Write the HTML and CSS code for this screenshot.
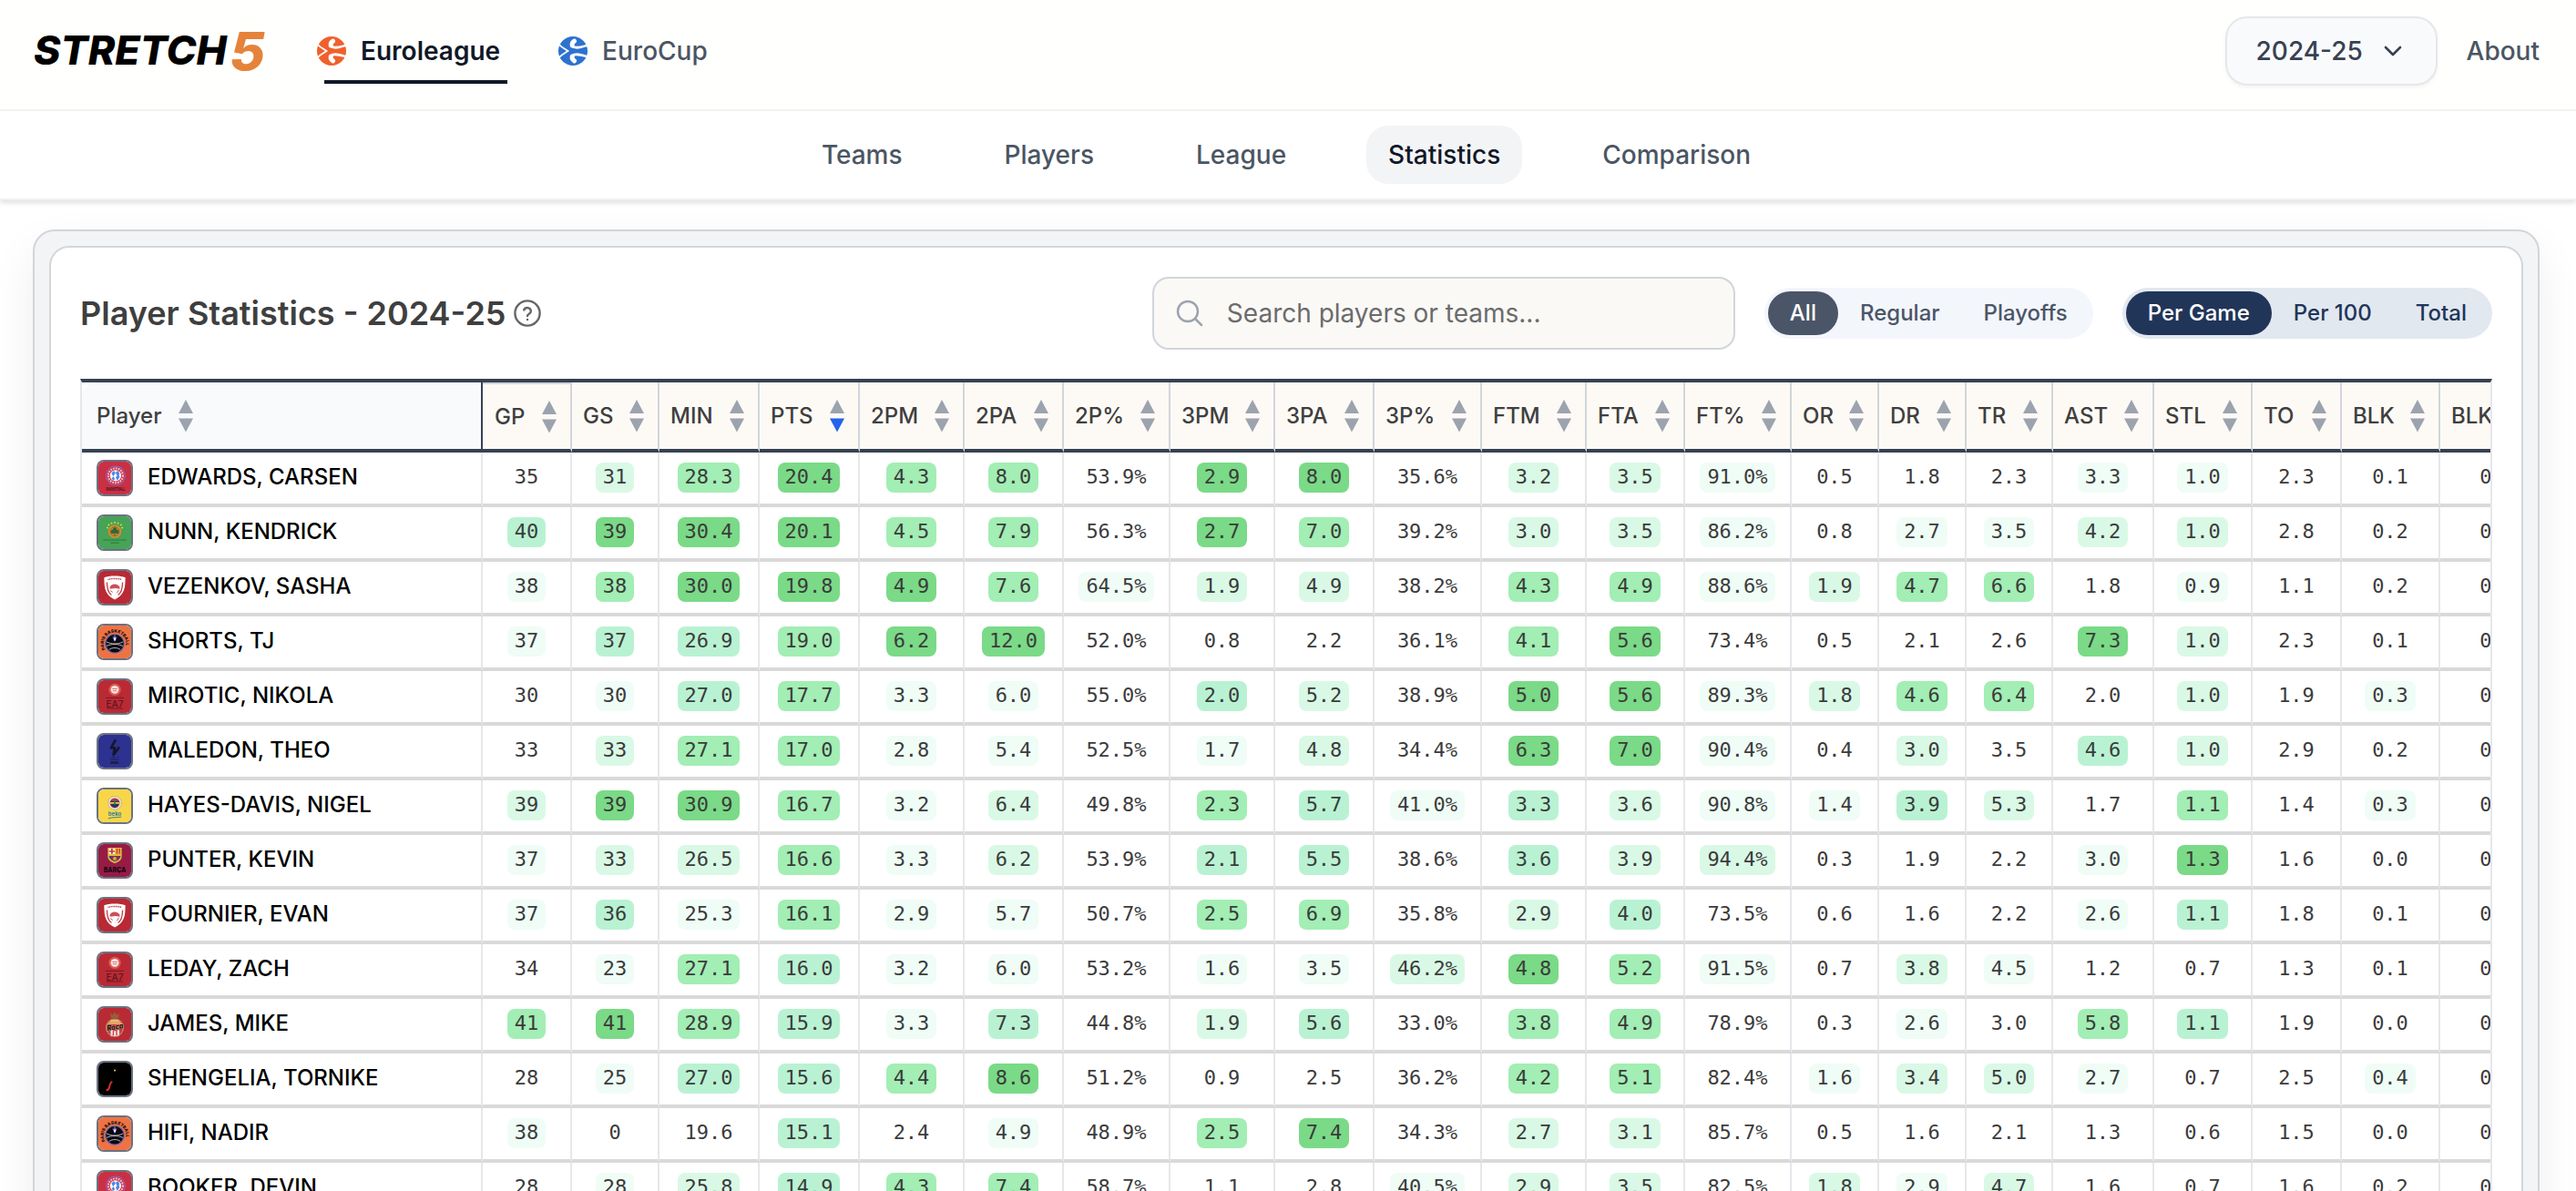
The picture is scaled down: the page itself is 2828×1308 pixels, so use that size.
FILE: index.html
```
<!DOCTYPE html>
<html lang="en">
<head>
<meta charset="utf-8">
<title>Stretch 5 - Player Statistics</title>
<link rel="stylesheet" href="styles.css">
</head>
<body>
<svg class="defs" aria-hidden="true">
  <symbol id="ball" viewBox="0 0 32 32">
    <circle cx="16" cy="16" r="16" fill="currentColor"/>
    <g fill="none" stroke="#fff" stroke-linecap="round">
      <path stroke-width="5" d="M17.500 5.200C15.500 6.500 14.800 8 15.200 10M17.500 26.800C15.500 25.500 14.800 24 15.200 22"/>
      <path stroke-width="2.600" d="M15 10.800C19 14 26 11.500 32 9.700M15 21.200C19 18 26 20.500 32 22.300"/>
      <path stroke-width="1.800" d="M1.500 9.500C4 12.500 7 13.500 10.500 16C7 18.500 4 19.500 1.500 22.500"/>
    </g>
  </symbol>
  <symbol id="sort" viewBox="0 0 16 36">
    <path d="M8 0L16 15H0z"/><path class="down" d="M8 35.500L0 20.500H16z"/>
  </symbol>
  <symbol id="bay" viewBox="0 0 40 40">
    <rect width="40" height="40" fill="#cb2f43"/>
    <circle cx="21" cy="17" r="12" fill="#5a80dd"/><circle cx="21" cy="17" r="11.200" fill="#d8324a"/>
    <circle cx="21" cy="17" r="8.900" fill="none" stroke="#f3c3cb" stroke-width="2.200" stroke-dasharray="2 1.200"/>
    <circle cx="21" cy="17" r="6.800" fill="#fff"/>
    <path d="M16 14l3-3 2 3-3 4zM21 13l3-2 2 4-3 3zM16 20l3-2 1 4-2 1zM21 19l4-3 1 3-3 4z" fill="#4b86ea"/>
    <text x="21" y="35.500" font-size="6" font-weight="700" text-anchor="middle" textLength="23" lengthAdjust="spacingAndGlyphs" fill="#4a1420">BASKETBALL</text>
  </symbol>
  <symbol id="pan" viewBox="0 0 40 40">
    <rect width="40" height="40" fill="#46a357"/>
    <circle cx="20" cy="18.500" r="8" fill="#e08a2e"/><circle cx="20" cy="18.500" r="5.600" fill="none" stroke="#7c6a2c"/>
    <g fill="#2c6a38"><circle cx="20" cy="16" r="2.500"/><circle cx="17.500" cy="19" r="2.500"/><circle cx="22.500" cy="19" r="2.500"/><path d="M19.400 19h1.200v4.500h-1.200z"/></g>
    <path d="M11 14h.1M12.500 10.500h.1M16 8.500h.1M20 7.700h.1M24 8.500h.1M27.500 10.500h.1M29 14h.1" stroke="#e4e23e" stroke-width="2" stroke-linecap="round"/>
    <path d="M6 29h28M15 32.500h10" stroke="#2d7a3c" stroke-width="1.400" stroke-dasharray="1.600 .5"/>
  </symbol>
  <symbol id="oly" viewBox="0 0 40 40">
    <rect width="40" height="40" fill="#b92a35"/>
    <path d="M7 8C13 5.500 27 5.500 33 8C32.500 17 34 28 20 35C6 28 7.500 17 7 8z" fill="#fff"/>
    <path d="M10.500 14C10.500 20 11 26 16 29.500M29.500 14C29.500 20 29 26 24 29.500" fill="none" stroke="#c4414b" stroke-width="1.500"/>
    <path d="M11.500 10.500C17 9 23 9 28.500 10.500" fill="none" stroke="#c4414b" stroke-width="1.600" stroke-dasharray="1.300 .6"/>
    <path d="M14 20C15 15.500 23 14.500 26 19.500L26 22L21 21L14 22z" fill="#cc4f58"/>
    <path d="M14.500 24l3 2M25 23l-2.500 4" stroke="#c4414b"/>
  </symbol>
  <symbol id="par" viewBox="0 0 40 40">
    <rect width="40" height="40" fill="#ee7344"/>
    <circle cx="20" cy="22" r="12" fill="#6b62b4"/><circle cx="20" cy="22" r="10.800" fill="#0b0a10"/>
    <path d="M20 11.500v7M10 20c6 3 14 3 20 0M10 25c6-3 14-3 20 0M13 29.500c4-3 10-3 14 0" fill="none" stroke="#dcd9e4" stroke-width=".9"/>
    <path d="M17 14h6l-3 6z" fill="#7b6fd8"/><path d="M19 15h2v3h-2z" fill="#fff"/>
    <path id="parc" d="M8.300 29A13.600 13.600 0 1 1 31.700 29" fill="none"/>
    <text font-size="5.200" font-weight="900" fill="#24120c"><textPath href="#parc" textLength="52">PARIS BASKETBALL</textPath></text>
  </symbol>
  <symbol id="mil" viewBox="0 0 40 40">
    <rect width="40" height="40" fill="#b92a35"/>
    <circle cx="20" cy="11.500" r="7.400" fill="#dd5a50"/><circle cx="20" cy="11.500" r="4.900" fill="#fbe6e4"/>
    <path d="M17 10.500h6M17.500 13h5" stroke="#c0444c" stroke-width=".8"/>
    <path d="M9 21.500h22M10 34.500h20" stroke="#6e1a22" stroke-width="1"/>
    <text x="20" y="32.800" font-size="11.500" font-weight="500" text-anchor="middle" textLength="21" lengthAdjust="spacingAndGlyphs" fill="#5d161d">EA7</text>
  </symbol>
  <symbol id="asv" viewBox="0 0 40 40">
    <rect width="40" height="40" fill="#2d3290"/>
    <path d="M21 6L15.500 16H20L18.500 24.500L25.500 15" fill="none" stroke="#15162c" stroke-width="3" stroke-linejoin="round"/>
    <text x="20" y="31.500" font-size="5" text-anchor="middle" textLength="11" fill="#1b1d52">LDLC</text>
    <text x="20" y="36" font-size="4" font-weight="800" text-anchor="middle" textLength="11" fill="#15162c">ASVEL</text>
  </symbol>
  <symbol id="fen" viewBox="0 0 40 40">
    <rect width="40" height="40" fill="#f9d648"/>
    <circle cx="20" cy="16.500" r="8.300" fill="#e9e4cf" stroke="#b4ac80" stroke-width=".8"/>
    <circle cx="20" cy="16.500" r="6" fill="#b8323f"/><path d="M14.500 14.500h11L24 20l-4 2.500L16 20z" fill="#1d3768"/><path d="M14.500 15.500h11v2h-11z" fill="#e8d33f"/>
    <path d="M19 13.500h2v5h-2z" fill="#2f7d4a"/>
    <text x="20" y="32" font-size="7.500" font-weight="700" text-anchor="middle" textLength="16" lengthAdjust="spacingAndGlyphs" fill="#2b7f9f">beko</text>
    <path d="M12 35.500C17 33.500 23 34.500 28 33.500" fill="none" stroke="#2b7f9f" stroke-width="1.100"/>
  </symbol>
  <symbol id="bar" viewBox="0 0 40 40">
    <rect width="40" height="40" fill="#971b45"/>
    <path d="M11.500 4.500h17V15C28.500 20 24 22 20 23.500C16 22 11.500 20 11.500 15z" fill="#e5b93c"/>
    <path d="M13 5.500h7v6.500h-7z" fill="#fff"/><path d="M15.500 5.500h2v6.500h-2zM13 8h7v1.800h-7z" fill="#cf2f3e"/>
    <path d="M22 5.500h1.500v6.500H22zM25 5.500h1.500v6.500H25z" fill="#c8313c"/>
    <path d="M13 14.500h14c0 3.500-4 5.800-7 7c-3-1.200-7-3.500-7-7z" fill="#27488f"/><path d="M16 14.500h2.500v6L16 19zM22 14.500h2.500V19L22 20.500z" fill="#a8213c"/>
    <circle cx="20" cy="17.800" r="2.200" fill="#d9a935"/>
    <text x="20" y="34.500" font-size="9" font-weight="800" text-anchor="middle" textLength="27" lengthAdjust="spacingAndGlyphs" fill="#120a10">BARÇA</text>
  </symbol>
  <symbol id="mon" viewBox="0 0 40 40">
    <rect width="40" height="40" fill="#b92a35"/>
    <path d="M14.500 6l3 3 2.500-4 2.500 4 3-3-1 6.500h-9z" fill="#8f6437"/>
    <circle cx="20" cy="24" r="11.300" fill="#b68a5e"/><circle cx="20" cy="24" r="9.800" fill="#c63c44"/>
    <path d="M11 20a10 10 0 0 1 18 0z" fill="#e9a35c"/><path d="M15 27h2.500v6H15zM19 28h2.500v6.500H19zM23 27h2.500v6H23z" fill="#f6e9e6"/>
    <path d="M15 15.500h10M15 34h10" stroke="#f2cfc8" stroke-width="1.400" stroke-dasharray="1.500 .7"/>
    <text x="20.500" y="26.500" font-size="9.500" font-weight="800" font-style="italic" text-anchor="middle" textLength="20" lengthAdjust="spacingAndGlyphs" transform="rotate(-10 20 24)" fill="#1b1210" stroke="#f0dcc0" stroke-width=".5" paint-order="stroke">Roca</text>
  </symbol>
  <symbol id="vir" viewBox="0 0 40 40">
    <rect width="40" height="40" fill="#000"/>
    <circle cx="20" cy="9.500" r="1.200" fill="#d9c63c"/>
    <path d="M9.500 33.500c2.600.4 3.200-.8 3.800-3.300c.7-3 1-6.200 3.700-7" fill="none" stroke="#e0312c" stroke-width="2.200"/>
  </symbol>
</svg>

<header class="topbar">
  <a class="logo"><svg width="256" height="48" viewBox="0 0 256 48"><text class="logo-word" x="1" y="40" textLength="212" lengthAdjust="spacingAndGlyphs">STRETCH</text><text class="logo-num" x="216" y="45.500" textLength="39" lengthAdjust="spacingAndGlyphs">5</text></svg></a>
  <nav class="leagues">
    <a class="league active"><svg class="ball orange"><use href="#ball"/></svg>Euroleague</a>
    <a class="league"><svg class="ball blue"><use href="#ball"/></svg>EuroCup</a>
  </nav>
  <div class="topright">
    <button class="season">2024-25<svg width="20" height="12" viewBox="0 0 20 12"><path d="M2 2l8 8 8-8" fill="none" stroke="currentColor" stroke-width="2.600" stroke-linecap="round" stroke-linejoin="round"/></svg></button>
    <a class="about">About</a>
  </div>
</header>
<nav class="subnav"><a>Teams</a><a>Players</a><a>League</a><a class="active">Statistics</a><a>Comparison</a></nav>

<main class="frame"><section class="panel">
  <div class="toolbar">
    <h1>Player Statistics - 2024-25</h1>
    <svg class="help" viewBox="0 0 30 30"><g fill="none" stroke="#666" stroke-width="2.400" stroke-linecap="round" stroke-linejoin="round"><circle cx="15" cy="15" r="13.600"/><path d="M11.200 11.500a4 4 0 0 1 7.700 1.300c0 2.600-3.900 3.400-3.900 5.200M15 22h.01"/></g></svg>
    <label class="search"><svg width="30" height="30" viewBox="0 0 30 30"><g fill="none" stroke="#9ca3af" stroke-width="2.500" stroke-linecap="round"><circle cx="13" cy="13" r="11"/><path d="M21.500 21.500L28 28"/></g></svg><span>Search players or teams...</span></label>
    <div class="seg seg-phase"><a class="on">All</a><a>Regular</a><a>Playoffs</a></div>
    <div class="seg seg-mode"><a class="on">Per Game</a><a>Per 100</a><a>Total</a></div>
  </div>
  <div class="tablewrap">
  <table>
    <colgroup><col class="w440"><col class="w98"><col class="w96"><col class="w110"><col class="w110"><col class="w115"><col class="w109"><col class="w117"><col class="w115"><col class="w109"><col class="w118"><col class="w115"><col class="w108"><col class="w117"><col class="w96"><col class="w96"><col class="w95"><col class="w111"><col class="w108"><col class="w98"><col class="w108"><col class="w128"></colgroup>
    <thead><tr>
      <th class="first"><div>Player<svg><use href="#sort"/></svg></div></th>
      <th class="gp"><div>GP<svg><use href="#sort"/></svg></div></th>
      <th><div>GS<svg><use href="#sort"/></svg></div></th>
      <th><div>MIN<svg><use href="#sort"/></svg></div></th>
      <th class="sorted"><div>PTS<svg><use href="#sort"/></svg></div></th>
      <th><div>2PM<svg><use href="#sort"/></svg></div></th>
      <th><div>2PA<svg><use href="#sort"/></svg></div></th>
      <th><div>2P%<svg><use href="#sort"/></svg></div></th>
      <th><div>3PM<svg><use href="#sort"/></svg></div></th>
      <th><div>3PA<svg><use href="#sort"/></svg></div></th>
      <th><div>3P%<svg><use href="#sort"/></svg></div></th>
      <th><div>FTM<svg><use href="#sort"/></svg></div></th>
      <th><div>FTA<svg><use href="#sort"/></svg></div></th>
      <th><div>FT%<svg><use href="#sort"/></svg></div></th>
      <th><div>OR<svg><use href="#sort"/></svg></div></th>
      <th><div>DR<svg><use href="#sort"/></svg></div></th>
      <th><div>TR<svg><use href="#sort"/></svg></div></th>
      <th><div>AST<svg><use href="#sort"/></svg></div></th>
      <th><div>STL<svg><use href="#sort"/></svg></div></th>
      <th><div>TO<svg><use href="#sort"/></svg></div></th>
      <th><div>BLK<svg><use href="#sort"/></svg></div></th>
      <th><div>BLKA<svg><use href="#sort"/></svg></div></th>
    </tr></thead>
    <tbody>
    <tr><td><div class="player"><svg><use href="#bay"/></svg><span>EDWARDS, CARSEN</span></div></td><td><b>35</b></td><td><b class="h2">31</b></td><td><b class="h4">28.3</b></td><td><b class="h5">20.4</b></td><td><b class="h4">4.3</b></td><td><b class="h4">8.0</b></td><td><b>53.9%</b></td><td><b class="h5">2.9</b></td><td><b class="h5">8.0</b></td><td><b>35.6%</b></td><td><b class="h2">3.2</b></td><td><b class="h2">3.5</b></td><td><b class="h1">91.0%</b></td><td><b>0.5</b></td><td><b>1.8</b></td><td><b>2.3</b></td><td><b class="h1">3.3</b></td><td><b class="h1">1.0</b></td><td><b>2.3</b></td><td><b>0.1</b></td><td><b>0.1</b></td></tr>
    <tr><td><div class="player"><svg><use href="#pan"/></svg><span>NUNN, KENDRICK</span></div></td><td><b class="h3">40</b></td><td><b class="h5">39</b></td><td><b class="h5">30.4</b></td><td><b class="h5">20.1</b></td><td><b class="h4">4.5</b></td><td><b class="h4">7.9</b></td><td><b>56.3%</b></td><td><b class="h5">2.7</b></td><td><b class="h4">7.0</b></td><td><b>39.2%</b></td><td><b class="h2">3.0</b></td><td><b class="h2">3.5</b></td><td><b class="h1">86.2%</b></td><td><b>0.8</b></td><td><b class="h1">2.7</b></td><td><b class="h1">3.5</b></td><td><b class="h2">4.2</b></td><td><b class="h2">1.0</b></td><td><b>2.8</b></td><td><b>0.2</b></td><td><b>0.1</b></td></tr>
    <tr><td><div class="player"><svg><use href="#oly"/></svg><span>VEZENKOV, SASHA</span></div></td><td><b class="h1">38</b></td><td><b class="h4">38</b></td><td><b class="h5">30.0</b></td><td><b class="h5">19.8</b></td><td><b class="h5">4.9</b></td><td><b class="h4">7.6</b></td><td><b class="h1">64.5%</b></td><td><b class="h2">1.9</b></td><td><b class="h2">4.9</b></td><td><b>38.2%</b></td><td><b class="h4">4.3</b></td><td><b class="h4">4.9</b></td><td><b class="h1">88.6%</b></td><td><b class="h2">1.9</b></td><td><b class="h4">4.7</b></td><td><b class="h4">6.6</b></td><td><b>1.8</b></td><td><b class="h1">0.9</b></td><td><b>1.1</b></td><td><b>0.2</b></td><td><b>0.1</b></td></tr>
    <tr><td><div class="player"><svg><use href="#par"/></svg><span>SHORTS, TJ</span></div></td><td><b class="h1">37</b></td><td><b class="h3">37</b></td><td><b class="h3">26.9</b></td><td><b class="h4">19.0</b></td><td><b class="h5">6.2</b></td><td><b class="h5">12.0</b></td><td><b>52.0%</b></td><td><b>0.8</b></td><td><b>2.2</b></td><td><b>36.1%</b></td><td><b class="h4">4.1</b></td><td><b class="h5">5.6</b></td><td><b>73.4%</b></td><td><b>0.5</b></td><td><b>2.1</b></td><td><b>2.6</b></td><td><b class="h5">7.3</b></td><td><b class="h2">1.0</b></td><td><b>2.3</b></td><td><b>0.1</b></td><td><b>0.1</b></td></tr>
    <tr><td><div class="player"><svg><use href="#mil"/></svg><span>MIROTIC, NIKOLA</span></div></td><td><b>30</b></td><td><b class="h1">30</b></td><td><b class="h3">27.0</b></td><td><b class="h4">17.7</b></td><td><b class="h1">3.3</b></td><td><b class="h1">6.0</b></td><td><b>55.0%</b></td><td><b class="h3">2.0</b></td><td><b class="h2">5.2</b></td><td><b>38.9%</b></td><td><b class="h5">5.0</b></td><td><b class="h5">5.6</b></td><td><b class="h1">89.3%</b></td><td><b class="h2">1.8</b></td><td><b class="h4">4.6</b></td><td><b class="h4">6.4</b></td><td><b>2.0</b></td><td><b class="h2">1.0</b></td><td><b>1.9</b></td><td><b class="h1">0.3</b></td><td><b>0.1</b></td></tr>
    <tr><td><div class="player"><svg><use href="#asv"/></svg><span>MALEDON, THEO</span></div></td><td><b>33</b></td><td><b class="h2">33</b></td><td><b class="h4">27.1</b></td><td><b class="h4">17.0</b></td><td><b class="h1">2.8</b></td><td><b class="h1">5.4</b></td><td><b>52.5%</b></td><td><b class="h1">1.7</b></td><td><b class="h2">4.8</b></td><td><b>34.4%</b></td><td><b class="h5">6.3</b></td><td><b class="h5">7.0</b></td><td><b class="h1">90.4%</b></td><td><b>0.4</b></td><td><b class="h2">3.0</b></td><td><b>3.5</b></td><td><b class="h3">4.6</b></td><td><b class="h2">1.0</b></td><td><b>2.9</b></td><td><b>0.2</b></td><td><b>0.1</b></td></tr>
    <tr><td><div class="player"><svg><use href="#fen"/></svg><span>HAYES-DAVIS, NIGEL</span></div></td><td><b class="h2">39</b></td><td><b class="h5">39</b></td><td><b class="h5">30.9</b></td><td><b class="h4">16.7</b></td><td><b class="h1">3.2</b></td><td><b class="h2">6.4</b></td><td><b>49.8%</b></td><td><b class="h4">2.3</b></td><td><b class="h3">5.7</b></td><td><b class="h1">41.0%</b></td><td><b class="h3">3.3</b></td><td><b class="h2">3.6</b></td><td><b class="h1">90.8%</b></td><td><b class="h1">1.4</b></td><td><b class="h3">3.9</b></td><td><b class="h2">5.3</b></td><td><b>1.7</b></td><td><b class="h4">1.1</b></td><td><b>1.4</b></td><td><b class="h1">0.3</b></td><td><b>0.1</b></td></tr>
    <tr><td><div class="player"><svg><use href="#bar"/></svg><span>PUNTER, KEVIN</span></div></td><td><b class="h1">37</b></td><td><b class="h2">33</b></td><td><b class="h2">26.5</b></td><td><b class="h4">16.6</b></td><td><b class="h1">3.3</b></td><td><b class="h2">6.2</b></td><td><b>53.9%</b></td><td><b class="h3">2.1</b></td><td><b class="h3">5.5</b></td><td><b>38.6%</b></td><td><b class="h3">3.6</b></td><td><b class="h2">3.9</b></td><td><b class="h2">94.4%</b></td><td><b>0.3</b></td><td><b>1.9</b></td><td><b>2.2</b></td><td><b class="h1">3.0</b></td><td><b class="h5">1.3</b></td><td><b>1.6</b></td><td><b>0.0</b></td><td><b>0.1</b></td></tr>
    <tr><td><div class="player"><svg><use href="#oly"/></svg><span>FOURNIER, EVAN</span></div></td><td><b class="h1">37</b></td><td><b class="h3">36</b></td><td><b class="h1">25.3</b></td><td><b class="h4">16.1</b></td><td><b class="h1">2.9</b></td><td><b class="h1">5.7</b></td><td><b>50.7%</b></td><td><b class="h4">2.5</b></td><td><b class="h4">6.9</b></td><td><b>35.8%</b></td><td><b class="h2">2.9</b></td><td><b class="h3">4.0</b></td><td><b>73.5%</b></td><td><b>0.6</b></td><td><b>1.6</b></td><td><b>2.2</b></td><td><b class="h1">2.6</b></td><td><b class="h3">1.1</b></td><td><b>1.8</b></td><td><b>0.1</b></td><td><b>0.1</b></td></tr>
    <tr><td><div class="player"><svg><use href="#mil"/></svg><span>LEDAY, ZACH</span></div></td><td><b>34</b></td><td><b class="h1">23</b></td><td><b class="h4">27.1</b></td><td><b class="h3">16.0</b></td><td><b class="h1">3.2</b></td><td><b class="h1">6.0</b></td><td><b>53.2%</b></td><td><b class="h1">1.6</b></td><td><b class="h1">3.5</b></td><td><b class="h2">46.2%</b></td><td><b class="h5">4.8</b></td><td><b class="h4">5.2</b></td><td><b class="h1">91.5%</b></td><td><b>0.7</b></td><td><b class="h2">3.8</b></td><td><b class="h1">4.5</b></td><td><b>1.2</b></td><td><b>0.7</b></td><td><b>1.3</b></td><td><b>0.1</b></td><td><b>0.1</b></td></tr>
    <tr><td><div class="player"><svg><use href="#mon"/></svg><span>JAMES, MIKE</span></div></td><td><b class="h4">41</b></td><td><b class="h5">41</b></td><td><b class="h4">28.9</b></td><td><b class="h3">15.9</b></td><td><b class="h1">3.3</b></td><td><b class="h3">7.3</b></td><td><b>44.8%</b></td><td><b class="h2">1.9</b></td><td><b class="h3">5.6</b></td><td><b>33.0%</b></td><td><b class="h4">3.8</b></td><td><b class="h4">4.9</b></td><td><b>78.9%</b></td><td><b>0.3</b></td><td><b class="h1">2.6</b></td><td><b>3.0</b></td><td><b class="h4">5.8</b></td><td><b class="h3">1.1</b></td><td><b>1.9</b></td><td><b>0.0</b></td><td><b>0.1</b></td></tr>
    <tr><td><div class="player"><svg><use href="#vir"/></svg><span>SHENGELIA, TORNIKE</span></div></td><td><b>28</b></td><td><b class="h1">25</b></td><td><b class="h3">27.0</b></td><td><b class="h3">15.6</b></td><td><b class="h4">4.4</b></td><td><b class="h5">8.6</b></td><td><b>51.2%</b></td><td><b>0.9</b></td><td><b>2.5</b></td><td><b>36.2%</b></td><td><b class="h4">4.2</b></td><td><b class="h4">5.1</b></td><td><b>82.4%</b></td><td><b class="h1">1.6</b></td><td><b class="h2">3.4</b></td><td><b class="h2">5.0</b></td><td><b class="h1">2.7</b></td><td><b>0.7</b></td><td><b>2.5</b></td><td><b class="h1">0.4</b></td><td><b>0.1</b></td></tr>
    <tr><td><div class="player"><svg><use href="#par"/></svg><span>HIFI, NADIR</span></div></td><td><b class="h1">38</b></td><td><b>0</b></td><td><b>19.6</b></td><td><b class="h3">15.1</b></td><td><b>2.4</b></td><td><b class="h1">4.9</b></td><td><b>48.9%</b></td><td><b class="h4">2.5</b></td><td><b class="h5">7.4</b></td><td><b>34.3%</b></td><td><b class="h2">2.7</b></td><td><b class="h2">3.1</b></td><td><b>85.7%</b></td><td><b>0.5</b></td><td><b>1.6</b></td><td><b>2.1</b></td><td><b>1.3</b></td><td><b>0.6</b></td><td><b>1.5</b></td><td><b>0.0</b></td><td><b>0.1</b></td></tr>
    <tr><td><div class="player"><svg><use href="#bay"/></svg><span>BOOKER, DEVIN</span></div></td><td><b>28</b></td><td><b class="h1">28</b></td><td><b class="h2">25.8</b></td><td><b class="h3">14.9</b></td><td><b class="h4">4.3</b></td><td><b class="h4">7.4</b></td><td><b>58.7%</b></td><td><b>1.1</b></td><td><b>2.8</b></td><td><b class="h1">40.5%</b></td><td><b class="h2">2.9</b></td><td><b class="h2">3.5</b></td><td><b>82.5%</b></td><td><b class="h2">1.8</b></td><td><b class="h1">2.9</b></td><td><b class="h2">4.7</b></td><td><b>1.6</b></td><td><b>0.7</b></td><td><b>1.6</b></td><td><b>0.2</b></td><td><b>0.1</b></td></tr>
    </tbody>
  </table>
  </div>
</section></main>
</body>
</html>
```
FILE: styles.css
```
* { box-sizing: border-box; }
html, body { margin: 0; height: 1308px; overflow: hidden; }
body { background: #fff; color: #3f3f3f; font-family: Inter, "Liberation Sans", sans-serif; font-size: 28px; }
.defs { position: absolute; width: 0; height: 0; }

.topbar { height: 122px; border-bottom: 2px solid #f3f4f6; background: #fffffd; display: flex; align-items: flex-start; padding: 0 40px 0 36px; }
.logo { width: 256px; height: 48px; margin-top: 31px; }
.logo svg { display: block; overflow: visible; }
.logo-word { font: italic 800 44px Inter, sans-serif; fill: #000; }
.logo-num { font: italic 800 58px Inter, sans-serif; fill: #e5833a; }
.leagues { display: flex; gap: 64px; margin-left: 56px; }
.league { display: flex; align-items: center; height: 92px; padding-top: 20px; gap: 16px; font-weight: 500; color: #4b5563; position: relative; }
.league.active { font-weight: 600; color: #111827; }
.league.active::after { content: ""; position: absolute; left: 8px; right: -8px; bottom: 0; height: 4px; background: #111827; }
.ball { width: 32px; height: 32px; }
.orange { color: #f0602c; }
.blue { color: #2c72cf; }
.topright { margin-left: auto; display: flex; align-items: center; gap: 32px; padding-top: 18px; color: #4b5563; font-weight: 500; }
.season { width: 233px; height: 76px; border: 2px solid #e5e7eb; border-radius: 24px; background: #f9fafc; font: 500 28px Inter, sans-serif; color: #374151; display: flex; align-items: center; gap: 23px; padding: 0 32px; box-shadow: 0 2px 4px rgba(0,0,0,.05); }

.subnav { height: 98px; border-bottom: 2px solid #f0f1f3; box-shadow: 0 3px 5px rgba(17,24,39,.13); display: flex; justify-content: center; align-items: center; gap: 64px; padding-right: 4px; font-weight: 500; color: #4b5563; }
.subnav a { height: 64px; line-height: 64px; padding: 0 24px; border-radius: 24px; }
.subnav .active { background: #f3f4f6; color: #111827; }

.frame { margin: 32px 40px 0 36px; height: 1400px; border: 2px solid #d1d5db; border-radius: 24px; background: #f3f4f6; padding: 16px; box-shadow: 0 20px 50px rgba(0,0,0,.07); }
.panel { height: 1360px; border: 2px solid #d4d6d9; border-radius: 22px; background: #fff; padding: 32px 32px 0 32px; }
.toolbar { height: 80px; display: flex; align-items: center; }
h1 { margin: 0; font-size: 36px; font-weight: 600; line-height: 44px; }
.help { width: 30px; height: 30px; margin-left: 9px; }
.search { width: 640px; height: 80px; margin-left: auto; border: 2px solid #d1d5db; border-radius: 18px; background: #faf9f6; display: flex; align-items: center; gap: 26px; padding-left: 24px; color: #6b6b6b; }
.seg { display: flex; padding: 4px; border-radius: 28px; font-size: 24px; font-weight: 500; }
.seg a { height: 48px; line-height: 48px; padding: 0 24px; border-radius: 24px; }
.seg-phase { margin-left: 32px; background: #f3f6fb; color: #4b5568; }
.seg-phase .on { background: #4b5568; color: #fff; }
.seg-mode { margin-left: 32px; background: #e2e8f0; color: #213559; }
.seg-mode .on { background: #213559; color: #fff; }

.tablewrap { margin-top: 32px; width: 2648px; height: 1200px; overflow: hidden; border-left: 2px solid #e5e7eb; border-right: 2px solid #e5e7eb; border-top: 4px solid #374151; }
table { table-layout: fixed; width: 2715px; border-collapse: separate; border-spacing: 0; }
.w440 { width: 440px; } .w98 { width: 98px; } .w96 { width: 96px; } .w110 { width: 110px; } .w115 { width: 115px; } .w109 { width: 109px; } .w117 { width: 117px; } .w118 { width: 118px; } .w108 { width: 108px; } .w95 { width: 95px; } .w111 { width: 111px; } .w128 { width: 128px; }
th { height: 77px; padding: 0; background: #fdfaf5; border-right: 2px solid #d1d5db; border-bottom: 4px solid #374151; font-size: 24px; font-weight: 500; }
th div { display: flex; justify-content: space-between; align-items: center; padding: 0 15px 0 12px; }
th.first { background: #f8fafc; border-right-color: #374151; border-top-left-radius: 16px; }
th.first div { justify-content: flex-start; gap: 19px; padding-left: 16px; }
th.gp { border-top: 2px solid #d1d5db; }
th.gp div { padding-left: 13px; }
th svg { width: 16px; height: 36px; fill: #9ca3af; }
th.sorted svg { --down: #2563eb; }
.down { fill: var(--down, #9ca3af); }
td { height: 60px; padding: 11px 0 0; vertical-align: top; line-height: 0; text-align: center; border-right: 2px solid #e5e7eb; border-bottom: 4px solid #d9d9d9; }
td:first-child { padding-top: 8px; }
td b { display: inline-block; vertical-align: top; height: 33px; padding: 0 8px; border-radius: 8px; font: 400 22px/32px "DejaVu Sans Mono", "Liberation Mono", monospace; color: #3b3b3b; }
.player { display: flex; gap: 16px; padding-left: 16px; font-size: 24px; font-weight: 500; line-height: 38px; color: #000; }
.player svg { width: 40px; height: 40px; border: 2px solid #6b7280; border-radius: 8px; }
.h1 { background: #effdf6; }
.h2 { background: #d9f9e6; }
.h3 { background: #b9f2d3; }
.h4 { background: #a2eeb4; }
.h5 { background: #7ada87; }
```
